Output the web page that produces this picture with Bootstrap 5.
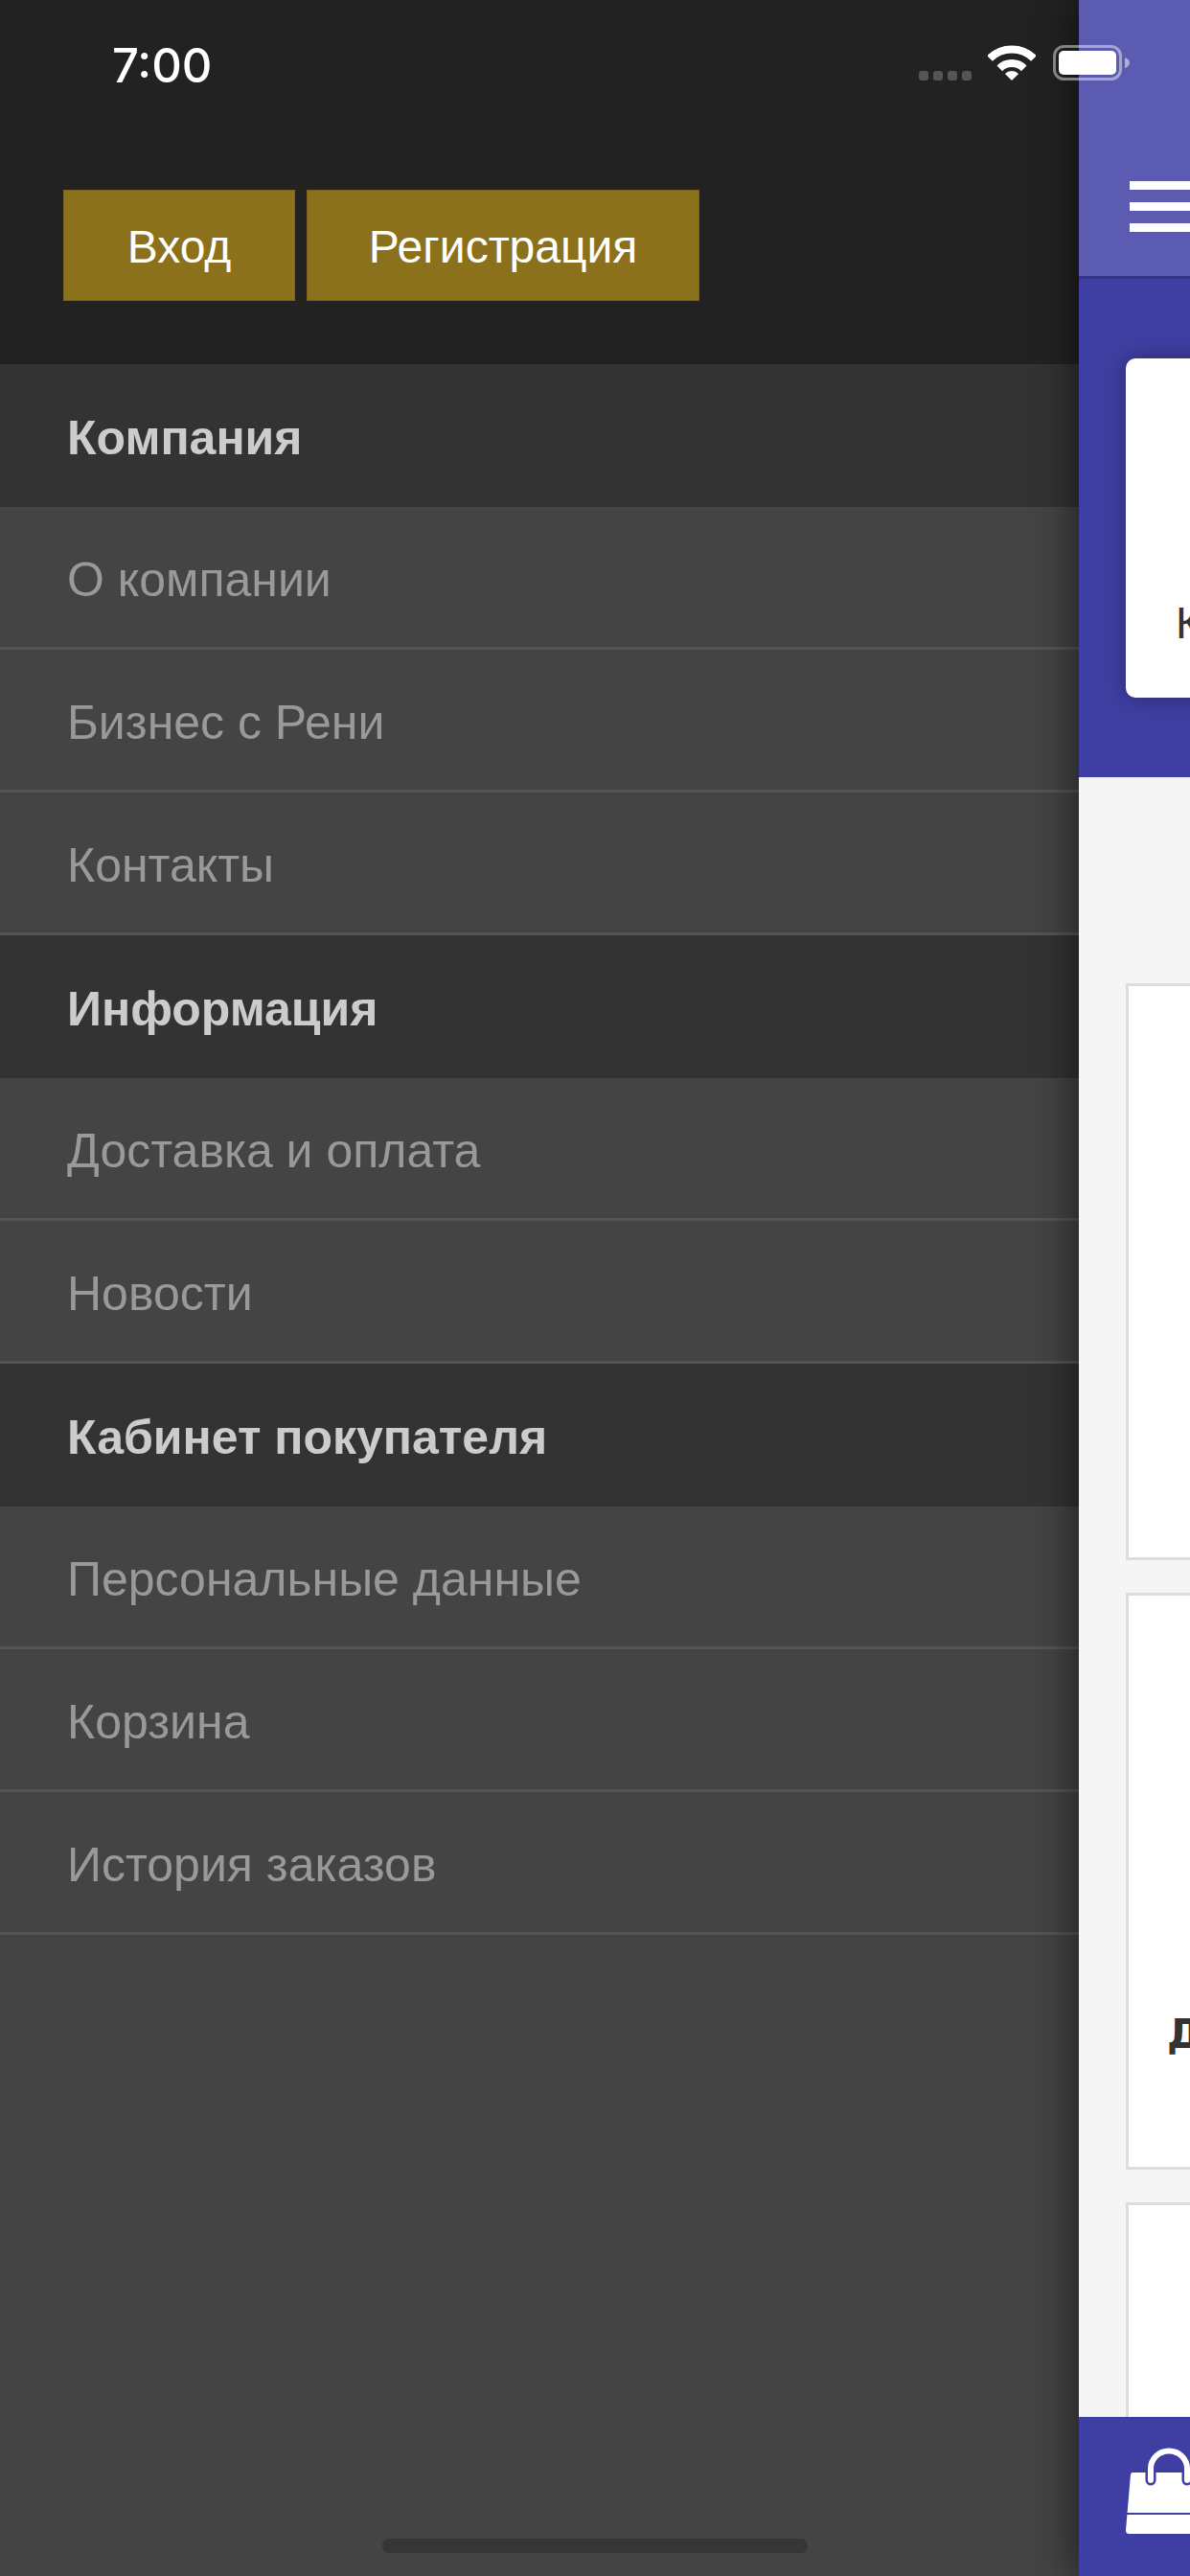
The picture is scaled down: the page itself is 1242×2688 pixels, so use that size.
<!DOCTYPE html>
<html lang="ru">
<head>
  <meta charset="UTF-8" />
  <meta name="viewport" content="width=device-width, initial-scale=1.0"/>
  <title>Меню</title>
  <link href="https://cdn.jsdelivr.net/npm/bootstrap@5.3.0/dist/css/bootstrap.min.css" rel="stylesheet">
  <style>
    body {
      font-family: "Liberation Sans", Arial, sans-serif;
      background-color: #444;
      width: 1242px;
      height: 2688px;
      overflow: hidden;
    }
    .app-shell { width: 1242px; height: 2688px; }

    /* status bar */
    .status-strip { height: 100px; padding: 47px 63px 0 117px; z-index: 5; }
    .status-time { font-family: Inter, "Liberation Sans", sans-serif; font-size: 49px; font-weight: 500; line-height: 44px; color: #fff; }
    .signal-dots { gap: 5px; margin-top: 27px; margin-right: 17px; }
    .signal-dots span { width: 10px; height: 10px; border-radius: 3px; background-color: #555; }
    .status-gap { margin-right: 18px; }

    /* side menu */
    .side-menu { flex: 0 0 1126px; background-color: #444; }
    .side-head { background-color: #222; height: 380px; padding: 198px 0 0 66px; gap: 12px; }
    .gold-btn {
      background-color: #8b711c;
      border: 1px solid #7a6420;
      border-radius: 0;
      color: #fff;
      font-size: 48px;
      line-height: 1;
      height: 116px;
      width: 242px;
      padding: 4px 0 0;
    }
    .gold-btn.wide-btn { width: 410px; }
    .side-menu .list-group { border-radius: 0; }
    .side-row {
      height: 149px;
      padding: 7px 0 0 70px;
      background-color: #444;
      color: #999;
      font-size: 50px;
      border: 0;
      border-bottom: 3px solid #555;
      border-radius: 0;
    }
    .side-row.side-title {
      padding-top: 5px;
      background-color: #333;
      color: #ccc;
      font-weight: 700;
      border-bottom: 0;
    }
    .home-bar { left: 399px; bottom: 24px; width: 444px; height: 15px; border-radius: 8px; background-color: #363636; z-index: 5; }

    /* page behind the menu */
    .main-panel { flex: 0 0 116px; overflow: hidden; box-shadow: -8px 0 40px rgba(0, 0, 0, .48); z-index: 2; background-color: #f5f5f5; }
    .main-inner { width: 1242px; }
    .top-bar { height: 291px; background-color: #5b5cb1; border-bottom: 3px solid #33338a; padding: 189px 0 0 53px; }
    .burger { width: 90px; gap: 13px; }
    .burger span { height: 9px; background-color: #fff; }
    .hero-band { height: 520px; background-color: #3f3fa3; padding: 83px 49px 0; }
    .hero-card {
      height: 354px;
      background-color: #fff;
      border-radius: 10px;
      box-shadow: 0 0 24px rgba(0, 0, 0, .35);
      padding: 0 0 55px 52px;
      color: #333;
      font-size: 46px;
      line-height: 46px;
    }
    .tile-list { padding: 215px 49px 0; gap: 34px; }
    .tile {
      height: 602px;
      background-color: #fff;
      border: 3px solid #ddd;
      padding: 437px 0 0 40px;
      color: #333;
      font-family: "DejaVu Sans", sans-serif;
      font-size: 42px;
      font-weight: 700;
      line-height: 42px;
    }
    .cart-bar { left: 1126px; bottom: 0; width: 116px; height: 166px; background-color: #3f3fa3; z-index: 3; padding: 33px 0 0 49px; }
    .cart-bar svg { display: block; overflow: visible; }
  </style>
</head>
<body>

<div class="app-shell position-relative d-flex overflow-hidden">

  <!-- Status bar -->
  <div class="status-strip position-absolute top-0 start-0 w-100 d-flex align-items-start">
    <div class="status-time">7:00</div>
    <div class="d-flex align-items-start ms-auto">
      <div class="signal-dots d-flex"><span></span><span></span><span></span><span></span></div>
      <svg class="status-gap" width="50" height="37" viewBox="0 0 50 37">
        <path d="M2 14A32.5 32.5 0 0 1 48 14" fill="none" stroke="#fff" stroke-width="8"/>
        <path d="M12.3 24.3A18 18 0 0 1 37.7 24.3" fill="none" stroke="#fff" stroke-width="8"/>
        <path d="M25 37L17.9 29.9A10 10 0 0 1 32.1 29.9Z" fill="#fff"/>
      </svg>
      <svg width="80" height="37" viewBox="0 0 80 37">
        <rect x="1.5" y="1.5" width="69" height="34" rx="10" fill="none" stroke="#fff" stroke-opacity=".45" stroke-width="3"/>
        <rect x="6" y="6" width="60" height="25" rx="5" fill="#fff"/>
        <path d="M75 13c3 1 5 3 5 5.500s-2 4.500-5 5.500z" fill="#fff" fill-opacity=".5"/>
      </svg>
    </div>
  </div>

  <!-- Side menu -->
  <aside class="side-menu">
    <div class="side-head d-flex align-items-start">
      <button type="button" class="btn gold-btn">Вход</button>
      <button type="button" class="btn gold-btn wide-btn">Регистрация</button>
    </div>
    <div class="list-group">
      <div class="list-group-item side-row side-title d-flex align-items-center">Компания</div>
      <a href="#" class="list-group-item side-row d-flex align-items-center">О компании</a>
      <a href="#" class="list-group-item side-row d-flex align-items-center">Бизнес с Рени</a>
      <a href="#" class="list-group-item side-row d-flex align-items-center">Контакты</a>
      <div class="list-group-item side-row side-title d-flex align-items-center">Информация</div>
      <a href="#" class="list-group-item side-row d-flex align-items-center">Доставка и оплата</a>
      <a href="#" class="list-group-item side-row d-flex align-items-center">Новости</a>
      <div class="list-group-item side-row side-title d-flex align-items-center">Кабинет покупателя</div>
      <a href="#" class="list-group-item side-row d-flex align-items-center">Персональные данные</a>
      <a href="#" class="list-group-item side-row d-flex align-items-center">Корзина</a>
      <a href="#" class="list-group-item side-row d-flex align-items-center">История заказов</a>
    </div>
  </aside>

  <!-- Page pushed aside by the menu -->
  <main class="main-panel">
    <div class="main-inner">
      <div class="top-bar">
        <div class="burger d-flex flex-column"><span></span><span></span><span></span></div>
      </div>
      <div class="hero-band">
        <div class="hero-card d-flex align-items-end">К</div>
      </div>
      <div class="tile-list d-flex flex-column">
        <div class="tile"></div>
        <div class="tile">Д</div>
        <div class="tile"></div>
      </div>
    </div>
  </main>

  <div class="cart-bar position-absolute">
    <svg width="90" height="89" viewBox="0 0 90 89">
      <path d="M7 25H83Q85 25 85.500 27L90 85Q90 89 87 89H3Q0 89 0 85L5 27Q5.500 25 7 25Z" fill="#fff"/>
      <path d="M0 68H90" stroke="#3f3fa3" stroke-width="2"/>
      <path d="M26 33V21a19 18.500 0 0 1 38 0V33" fill="none" stroke="#3f3fa3" stroke-width="11" stroke-linecap="round"/>
      <path d="M26 33V21a19 18.500 0 0 1 38 0V33" fill="none" stroke="#fff" stroke-width="6" stroke-linecap="round"/>
    </svg>
  </div>

  <div class="home-bar position-absolute"></div>
</div>

<script src="https://cdn.jsdelivr.net/npm/bootstrap@5.3.0/dist/js/bootstrap.bundle.min.js"></script>
</body>
</html>
